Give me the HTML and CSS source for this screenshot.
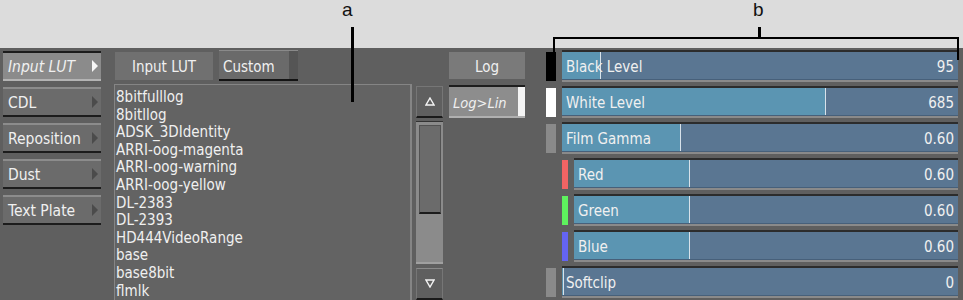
FILE: index.html
```html
<!DOCTYPE html>
<html lang="en">
<head>
    <meta charset="UTF-8">
    <title>Input LUT</title>
    <link rel="stylesheet" href="styles.css">
</head>
<body>
    <div class="top">
        <span class="callout callout-a">a</span>
        <div class="line line-a"></div>
        <span class="callout callout-b">b</span>
        <div class="bracket"></div>
        <div class="line line-b"></div>
    </div>

    <div class="panel">
        <div class="nav">
            <div class="nav-btn active"><span>Input LUT</span><i class="arrow"></i></div>
            <div class="nav-btn"><span>CDL</span><i class="arrow"></i></div>
            <div class="nav-btn"><span>Reposition</span><i class="arrow"></i></div>
            <div class="nav-btn"><span>Dust</span><i class="arrow"></i></div>
            <div class="nav-btn"><span>Text Plate</span><i class="arrow"></i></div>
        </div>

        <div class="middle">
            <div class="lut-row">
                <div class="label-box">Input LUT</div>
                <div class="custom-btn"><span>Custom</span><i class="drop"></i></div>
            </div>
            <ul class="lut-list">
                <li>8bitfulllog</li>
                <li>8bitllog</li>
                <li>ADSK_3DIdentity</li>
                <li>ARRI-oog-magenta</li>
                <li>ARRI-oog-warning</li>
                <li>ARRI-oog-yellow</li>
                <li>DL-2383</li>
                <li>DL-2393</li>
                <li>HD444VideoRange</li>
                <li>base</li>
                <li>base8bit</li>
                <li>flmlk</li>
            </ul>
        </div>

        <div class="scroll">
            <div class="scroll-btn">
                <svg width="10" height="9" viewBox="0 0 10 9"><path d="M5 1 L9 8 L1 8 Z" fill="none" stroke="#f4f4f4" stroke-width="1.4"/></svg>
            </div>
            <div class="track">
                <div class="thumb"></div>
            </div>
            <div class="scroll-btn down">
                <svg width="10" height="9" viewBox="0 0 10 9"><path d="M1 1 L9 1 L5 8 Z" fill="none" stroke="#f4f4f4" stroke-width="1.4"/></svg>
            </div>
        </div>

        <div class="logcol">
            <div class="log-label">Log</div>
            <div class="log-btn"><span>Log&gt;Lin</span><i class="strip"></i></div>
        </div>

        <div class="levels">
            <div class="level">
                <i class="swatch black"></i>
                <div class="slider"><div class="fill" style="width: 9.6%"></div><span class="name">Black Level</span><span class="value">95</span></div>
            </div>
            <div class="level">
                <i class="swatch white"></i>
                <div class="slider"><div class="fill" style="width: 66.4%"></div><span class="name">White Level</span><span class="value">685</span></div>
            </div>
            <div class="level">
                <i class="swatch gray"></i>
                <div class="slider"><div class="fill" style="width: 29.8%"></div><span class="name">Film Gamma</span><span class="value">0.60</span></div>
            </div>
            <div class="level sub">
                <i class="swatch red"></i>
                <div class="slider"><div class="fill" style="width: 30%"></div><span class="name">Red</span><span class="value">0.60</span></div>
            </div>
            <div class="level sub">
                <i class="swatch green"></i>
                <div class="slider"><div class="fill" style="width: 30%"></div><span class="name">Green</span><span class="value">0.60</span></div>
            </div>
            <div class="level sub">
                <i class="swatch blue"></i>
                <div class="slider"><div class="fill" style="width: 30%"></div><span class="name">Blue</span><span class="value">0.60</span></div>
            </div>
            <div class="level">
                <i class="swatch gray"></i>
                <div class="slider"><div class="fill" style="width: 0.3%"></div><span class="name">Softclip</span><span class="value">0</span></div>
            </div>
        </div>
    </div>
</body>
</html>
```

FILE: styles.css
```css
body {
    margin: 0;
    width: 963px;
    height: 300px;
    overflow: hidden;
    background-color: #5f5f5f;
    font-family: "DejaVu Sans Condensed", "DejaVu Sans", sans-serif;
    font-size: 15px;
    color: #f0f0f0;
}

.top {
    position: relative;
    height: 48px;
    background-color: #dcdcdc;
}

.callout {
    position: absolute;
    top: -1px;
    font-family: "Liberation Sans", Arial, sans-serif;
    font-size: 19px;
    color: #111;
}

.callout-a {
    left: 342px;
}

.callout-b {
    left: 753px;
}

.line {
    position: absolute;
    background-color: #000;
    width: 3px;
}

.line-a {
    left: 351px;
    top: 27px;
    height: 75px;
    z-index: 5;
}

.line-b {
    left: 758px;
    top: 27px;
    height: 11px;
}

.bracket {
    position: absolute;
    left: 553px;
    top: 37px;
    width: 402px;
    height: 14px;
    border: 2px solid #000;
    border-bottom: none;
    z-index: 5;
}

.bracket::after {
    content: "";
    position: absolute;
    right: -2px;
    top: 14px;
    width: 2px;
    height: 7px;
    background-color: #000;
}

.panel {
    display: flex;
    height: 252px;
    overflow: hidden;
}

/* left menu */
.nav {
    width: 98px;
    margin-left: 3px;
    padding-top: 3px;
    display: flex;
    flex-direction: column;
    gap: 6px;
}

.nav-btn {
    height: 26px;
    display: flex;
    align-items: center;
    justify-content: space-between;
    padding: 0 3px 0 5px;
    background-color: #6b6b6b;
    border-top: 2px solid #8c8c8c;
    border-bottom: 2px solid #1c1c1c;
    font-size: 15.5px;
}

.nav-btn span {
    padding-top: 2px;
}

.nav-btn.active {
    background-color: #8b8b8b;
    border-top-color: #1c1c1c;
    border-bottom-color: #b4b4b4;
    font-style: italic;
}

.arrow {
    width: 0;
    height: 0;
    border-top: 6px solid transparent;
    border-bottom: 6px solid transparent;
    border-left: 6px solid #4b4b4b;
}

.nav-btn.active .arrow {
    border-left-color: #f6f6f6;
}

/* LUT list */
.middle {
    width: 298px;
    margin-left: 13px;
}

.lut-row {
    height: 36px;
    display: flex;
    align-items: flex-start;
    padding-top: 2px;
    box-sizing: border-box;
}

.label-box {
    width: 98px;
    height: 26px;
    margin: 2px 0 0 1px;
    padding-top: 2px;
    background-color: #707070;
    display: flex;
    align-items: center;
    justify-content: center;
}

.custom-btn {
    width: 79px;
    height: 28px;
    margin-left: 6px;
    display: flex;
    background-color: #6a6a6a;
    border-top: 1px solid #8a8a8a;
    border-bottom: 2px solid #141414;
}

.custom-btn span {
    flex: 1;
    display: flex;
    align-items: center;
    padding: 3px 0 0 4px;
}

.drop {
    width: 9px;
    background-color: #555;
}

.lut-list {
    list-style: none;
    margin: 0;
    padding: 4px 0 0 1px;
    height: 228px;
    border: 1px solid #858585;
    border-right-width: 2px;
    background-color: #636363;
    line-height: 17.6px;
}

/* scrollbar */
.scroll {
    width: 27px;
    margin-left: 4px;
    padding-top: 38px;
    display: flex;
    flex-direction: column;
}

.scroll-btn {
    height: 29px;
    display: flex;
    align-items: center;
    justify-content: center;
    background-color: #5f5f5f;
    border: 1px solid #767676;
    border-bottom: 2px solid #1a1a1a;
    box-sizing: content-box;
    width: 25px;
}

.scroll-btn.down {
    margin-top: 4px;
    border-top-color: #8a8a8a;
}

.track {
    margin-top: 3px;
    height: 138px;
    padding: 3px 2px 0 3px;
    background-color: #8b8b8b;
    border-top: 1px solid #333;
    border-bottom: 2px solid #a0a0a0;
}

.thumb {
    height: 86px;
    background-color: #6b6b6b;
    border: 1px solid #525252;
    border-bottom: 2px solid #1c1c1c;
}

/* log */
.logcol {
    width: 76px;
    margin-left: 6px;
    padding-top: 4px;
    display: flex;
    flex-direction: column;
}

.log-label {
    height: 25px;
    padding-top: 2px;
    background-color: #7a7a7a;
    display: flex;
    align-items: center;
    justify-content: center;
}

.log-btn {
    margin-top: 6px;
    height: 29px;
    display: flex;
    background-color: #8d8d8d;
    border-top: 2px solid #1e1e1e;
    border-bottom: 2px solid #b0b0b0;
    font-style: italic;
    font-size: 14.5px;
}

.log-btn span {
    flex: 1;
    display: flex;
    align-items: center;
    padding: 2px 0 0 4px;
}

.strip {
    width: 7px;
    background-color: #f4f4f4;
}

/* levels */
.levels {
    flex: 1;
    margin: 0 5px 0 21px;
    padding-top: 2px;
    display: flex;
    flex-direction: column;
    gap: 4px;
}

.level {
    height: 32px;
    display: flex;
    gap: 6px;
}

.level.sub {
    padding-left: 16px;
}

.swatch {
    width: 10px;
    margin: 2px 0 1px;
}

.level.sub .swatch {
    width: 6px;
}

.swatch.black { background-color: #000; }
.swatch.white { background-color: #fff; }
.swatch.gray { background-color: #8a8a8a; }
.swatch.red { background-color: #f26464; }
.swatch.green { background-color: #5ef25e; }
.swatch.blue { background-color: #6464f2; }

.slider {
    flex: 1;
    position: relative;
    display: flex;
    align-items: center;
    justify-content: space-between;
    padding: 2px 4px 0;
    background-color: #5a7692;
    border-top: 2px solid #2c2c2c;
    border-bottom: 2px solid #8a8a8a;
    box-shadow: inset 0 -1px 0 #47607a;
}

.fill {
    position: absolute;
    left: 0;
    top: 0;
    bottom: 1px;
    background-color: #5b95b2;
    border-right: 1px solid #d8e2ea;
}

.name,
.value {
    position: relative;
}
```
